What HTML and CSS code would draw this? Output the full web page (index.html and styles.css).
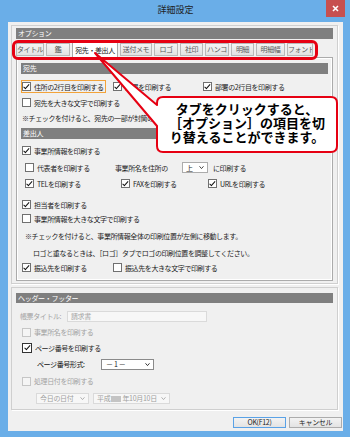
FILE: index.html
```html
<!DOCTYPE html>
<html lang="ja">
<head>
<meta charset="utf-8">
<title>詳細設定</title>
<link rel="stylesheet" href="styles.css">
</head>
<body>
<div class="window">
  <div class="titlebar">
    <span></span>
    <span class="title">詳細設定</span>
    <span class="close"><svg width="7" height="7" viewBox="0 0 7 7"><path d="M1 1 L6 6 M6 1 L1 6" stroke="#fff" stroke-width="1.6" fill="none"/></svg></span>
  </div>
  <div class="client">
    <section class="group group-options">
      <div class="bar">オプション</div>
      <div class="tabs">
        <div class="tab">タイトル</div>
        <div class="tab">鑑</div>
        <div class="tab tab-active">宛先・差出人</div>
        <div class="tab">送付メモ</div>
        <div class="tab">ロゴ</div>
        <div class="tab">社印</div>
        <div class="tab">ハンコ</div>
        <div class="tab">明細</div>
        <div class="tab">明細幅</div>
        <div class="tab">フォント</div>
      </div>
      <div class="panel">
        <div class="bar">宛先</div>
        <div class="row row-addr mt6">
          <label class="cb-item focus"><span class="cb checked"></span>住所の2行目を印刷する</label>
          <label class="cb-item"><span class="cb checked"></span>部署を印刷する</label>
          <label class="cb-item"><span class="cb checked"></span>部署の2行目を印刷する</label>
        </div>
        <div class="row mt3">
          <label class="cb-item"><span class="cb"></span>宛先を大きな文字で印刷する</label>
        </div>
        <div class="row note note-clip mt2">※チェックを付けると、宛先の一部が封筒の窓からはみ出すことがあります。</div>
        <div class="bar mt4">差出人</div>
        <div class="row mt5">
          <label class="cb-item"><span class="cb checked"></span>事業所情報を印刷する</label>
        </div>
        <div class="row row-rep mt4">
          <label class="cb-item"><span class="cb"></span>代表者を印刷する</label>
          <span class="text">事業所名を住所の</span>
          <span class="select select-pos"><span>上</span><svg width="5" height="3" viewBox="0 0 5 3"><path d="M0.5 0.3 L2.5 2.6 L4.5 0.3" stroke="#333" stroke-width="0.9" fill="none"/></svg></span>
          <span class="text after-select">に印刷する</span>
        </div>
        <div class="row row-tel mt3">
          <label class="cb-item"><span class="cb checked"></span>TELを印刷する</label>
          <label class="cb-item"><span class="cb checked"></span>FAXを印刷する</label>
          <label class="cb-item"><span class="cb checked"></span>URLを印刷する</label>
        </div>
        <div class="row mt8">
          <label class="cb-item"><span class="cb checked"></span>担当者を印刷する</label>
        </div>
        <div class="row mt1">
          <label class="cb-item"><span class="cb"></span>事業所情報を大きな文字で印刷する</label>
        </div>
        <div class="row note note-indent mt4">※チェックを付けると、事業所情報全体の印刷位置が左側に移動します。</div>
        <div class="row note note-indent2 mt4">ロゴと重なるときは、［ロゴ］タブでロゴの印刷位置を調整してください。</div>
        <div class="row row-bank mt2">
          <label class="cb-item"><span class="cb checked"></span>振込先を印刷する</label>
          <label class="cb-item"><span class="cb"></span>振込先を大きな文字で印刷する</label>
        </div>
      </div>
    </section>

    <section class="group group-hf">
      <div class="bar bar-hf">ヘッダー・フッター</div>
      <div class="hf-rows">
        <div class="hrow hrow-title">
          <span class="text disabled label-title">帳票タイトル:</span>
          <span class="input disabled">請求書</span>
        </div>
        <div class="hrow hrow-cb">
          <label class="cb-item disabled"><span class="cb"></span>事業所名を印刷する</label>
        </div>
        <div class="hrow hrow-cb">
          <label class="cb-item"><span class="cb cb-strong checked"></span>ページ番号を印刷する</label>
        </div>
        <div class="hrow hrow-fmt">
          <span class="text label-fmt">ページ番号形式:</span>
          <span class="select select-fmt"><span>－ 1 －</span><svg width="5" height="3" viewBox="0 0 5 3"><path d="M0.5 0.3 L2.5 2.6 L4.5 0.3" stroke="#222" stroke-width="0.9" fill="none"/></svg></span>
        </div>
        <div class="hrow hrow-cb">
          <label class="cb-item disabled"><span class="cb"></span>処理日付を印刷する</label>
        </div>
        <div class="hrow hrow-date">
          <span class="select select-disabled select-today"><span>今日の日付</span><svg width="5" height="3" viewBox="0 0 5 3"><path d="M0.5 0.3 L2.5 2.6 L4.5 0.3" stroke="#aaa" stroke-width="0.9" fill="none"/></svg></span>
          <span class="select select-disabled select-date"><span>平成<span class="redact"></span>年10月10日</span><svg width="5" height="3" viewBox="0 0 5 3"><path d="M0.5 0.3 L2.5 2.6 L4.5 0.3" stroke="#aaa" stroke-width="0.9" fill="none"/></svg></span>
        </div>
      </div>
    </section>

    <div class="buttons">
      <button class="btn btn-default">OK(F12)</button>
      <button class="btn">キャンセル</button>
    </div>
  </div>

  <div class="tab-highlight"></div>
  <svg class="callout-shape" width="252" height="106" viewBox="0 0 252 106">
    <path d="M73 47 H241 Q247 47 247 53 V96 Q247 102 241 102 H73 Q67 102 67 96 V76 L5 3 L67 55 V53 Q67 47 73 47 Z" fill="#fff" stroke="#e60012" stroke-width="2" stroke-linejoin="round"/>
  </svg>
  <div class="callout-text">
    <span>タブをクリックすると、</span>
    <span>［オプション］の項目を切</span>
    <span>り替えることができます。</span>
  </div>
</div>
</body>
</html>
```

FILE: styles.css
```css
html, body {
  margin: 0;
  padding: 0;
}
body {
  width: 350px;
  height: 437px;
  overflow: hidden;
  font-family: "Noto Sans CJK JP", "Noto Sans", sans-serif;
}
.window {
  position: relative;
  width: 350px;
  height: 437px;
  box-sizing: border-box;
  background: #6aaee8;
  padding: 0 7px 6px 8px;
  display: flex;
  flex-direction: column;
}
.titlebar {
  height: 22px;
  flex: none;
  display: grid;
  grid-template-columns: 1fr auto 1fr;
  align-items: start;
}
.title {
  font-size: 9px;
  line-height: 20px;
  color: #1e1e1e;
}
.close {
  justify-self: end;
  margin-right: -2px;
  width: 19px;
  height: 17px;
  background: #c75050;
  display: flex;
  align-items: center;
  justify-content: center;
}
.client {
  flex: 1;
  background: #f0f0f0;
  padding: 3px 0 0 3px;
  display: flex;
  flex-direction: column;
}
.group {
  box-sizing: border-box;
  border: 1px solid #cfcfcf;
  box-shadow: 1px 1px 0 #fff;
  margin-right: 5px;
  padding: 2px 4px;
  display: flex;
  flex-direction: column;
}
.group-options {
  height: 259px;
}
.group-hf {
  height: 123px;
  margin-top: 3px;
  padding-top: 5px;
}
.bar {
  height: 11px;
  flex: none;
  background: #7f7f7f;
  color: #fff;
  font-size: 7px;
  line-height: 11px;
  padding-left: 2px;
  letter-spacing: -0.3px;
}
.bar-hf {
  height: 10px;
  line-height: 10px;
}
.tabs {
  margin-top: 3px;
  height: 15px;
  flex: none;
  display: grid;
  grid-template-columns: 30px 26px 48px 34px 26px 25px 26px 25px 31px 28px;
  align-items: end;
}
.tab {
  box-sizing: border-box;
  height: 13px;
  margin: 0 2px 1px 0;
  border: 1px solid #b9b9b9;
  background: linear-gradient(#f4f4f4, #e2e2e2);
  color: #5a5a5a;
  font-size: 7px;
  line-height: 11px;
  text-align: center;
  letter-spacing: -0.4px;
  white-space: nowrap;
  overflow: hidden;
}
.tab-active {
  height: 16px;
  margin-bottom: -1px;
  background: #fff;
  border-color: #a8a8a8;
  border-bottom-color: #fff;
  color: #111;
  line-height: 14px;
  position: relative;
  z-index: 1;
}
.panel {
  flex: 1;
  box-sizing: border-box;
  border: 1px solid #ababab;
  box-shadow: inset 0 0 0 1px #fff;
  padding: 5px 4px 4px 4px;
  display: flex;
  flex-direction: column;
}
.row {
  height: 13px;
  flex: none;
  display: flex;
  align-items: center;
  font-size: 7px;
  color: #1e1e1e;
  letter-spacing: -0.4px;
  white-space: nowrap;
}
.mt1 { margin-top: 1px; }
.mt2 { margin-top: 2px; }
.mt3 { margin-top: 3px; }
.mt4 { margin-top: 4px; }
.mt5 { margin-top: 5px; }
.mt6 { margin-top: 6px; }
.mt8 { margin-top: 8px; }

.cb-item {
  display: inline-flex;
  align-items: center;
  gap: 3px;
  height: 13px;
  box-sizing: border-box;
  border: 1px solid transparent;
  padding-right: 1px;
  font-size: 7px;
  color: #1e1e1e;
  letter-spacing: -0.4px;
  white-space: nowrap;
}
.cb-item.focus {
  border-color: #f2a33a;
}
.cb {
  width: 9px;
  height: 9px;
  box-sizing: border-box;
  border: 1px solid #707070;
  background: #fff;
  position: relative;
  flex: none;
}
.cb.checked::after {
  content: "";
  position: absolute;
  left: 2.3px;
  top: 0;
  width: 2px;
  height: 4.6px;
  border: solid #111;
  border-width: 0 1.4px 1.4px 0;
  transform: rotate(42deg);
}
.cb-strong {
  width: 10px;
  height: 10px;
  border-color: #333;
}
.cb-strong.checked::after {
  left: 2.8px;
}
.disabled,
.cb-item.disabled {
  color: #a3a3a3;
}
.cb-item.disabled .cb {
  border-color: #c6c6c6;
  background: #f5f5f5;
}

.row-addr {
  display: grid;
  grid-template-columns: 91px 90px 1fr;
  justify-items: start;
}
.row-rep {
  display: grid;
  grid-template-columns: 91px 67px 26px auto;
  padding-left: 3px;
  justify-items: start;
}
.row-tel {
  display: grid;
  grid-template-columns: 96px 87px auto;
  padding-left: 3px;
  justify-items: start;
}
.row-bank {
  display: grid;
  grid-template-columns: 91px auto;
  justify-items: start;
}
.note {
  padding-left: 1px;
}
.note-clip {
  width: 134px;
  overflow: hidden;
}
.note-indent {
  padding-left: 4px;
}
.note-indent2 {
  padding-left: 12px;
}
.after-select {
  margin-left: 5px;
}
.select {
  box-sizing: border-box;
  height: 11px;
  border: 1px solid #acacac;
  background: #fff;
  display: flex;
  align-items: center;
  justify-content: space-between;
  padding: 0 3px 0 3px;
  font-size: 7px;
  color: #1e1e1e;
  letter-spacing: -0.3px;
  white-space: nowrap;
}
.select-pos {
  width: 26px;
}
.select-fmt {
  width: 53px;
  border-color: #8a8a8a;
  padding-left: 4px;
  padding-right: 3px;
}
.select-disabled {
  border-color: #dadada;
  background: #f7f7f7;
  color: #a0a0a0;
}
.select-today {
  width: 53px;
}
.select-date {
  width: 77px;
  margin-left: 4px;
}
.redact {
  display: inline-block;
  width: 10px;
  height: 6px;
  background: #c4c4c4;
  margin: 0 1px;
  vertical-align: -0.5px;
}

.hf-rows {
  margin-top: 7px;
  display: flex;
  flex-direction: column;
  gap: 4px;
}
.hrow {
  height: 12px;
  display: flex;
  align-items: center;
  font-size: 7px;
  letter-spacing: -0.4px;
  white-space: nowrap;
}
.hrow-title {
  padding-left: 4px;
}
.label-title {
  width: 47px;
  flex: none;
}
.input {
  box-sizing: border-box;
  width: 140px;
  height: 11px;
  border: 1px solid #dadada;
  background: #f7f7f7;
  padding-left: 3px;
  line-height: 9px;
  font-size: 7px;
}
.hrow-cb {
  padding-left: 5px;
}
.hrow-fmt {
  padding-left: 21px;
}
.label-fmt {
  width: 64px;
  flex: none;
  color: #111;
}
.hrow-date {
  padding-left: 20px;
  margin-top: 1px;
}
.hrow-cb:nth-child(5) {
  margin-top: 1px;
}

.buttons {
  margin-top: 7px;
  padding-right: 1px;
  display: flex;
  justify-content: flex-end;
  gap: 3px;
}
.btn {
  box-sizing: border-box;
  width: 53px;
  height: 11px;
  margin: 0;
  padding: 0;
  border: 1px solid #acacac;
  background: linear-gradient(#f3f3f3, #e3e3e3);
  font-family: "Noto Sans CJK JP", "Noto Sans", sans-serif;
  font-size: 7px;
  line-height: 9px;
  color: #1e1e1e;
  letter-spacing: -0.3px;
}
.btn-default {
  border-color: #5aa2e6;
}

.tab-highlight {
  position: absolute;
  left: 12px;
  top: 40px;
  width: 306px;
  height: 20px;
  box-sizing: border-box;
  border: 3px solid #e60012;
  border-radius: 6px;
  z-index: 2;
}
.callout-shape {
  position: absolute;
  left: 90px;
  top: 50px;
  z-index: 3;
}
.callout-text {
  position: absolute;
  left: 157px;
  top: 97px;
  width: 180px;
  height: 55px;
  box-sizing: border-box;
  padding-top: 5px;
  display: flex;
  flex-direction: column;
  align-items: center;
  font-size: 13px;
  line-height: 14px;
  font-weight: 700;
  color: #000;
  white-space: nowrap;
  z-index: 4;
}
```
